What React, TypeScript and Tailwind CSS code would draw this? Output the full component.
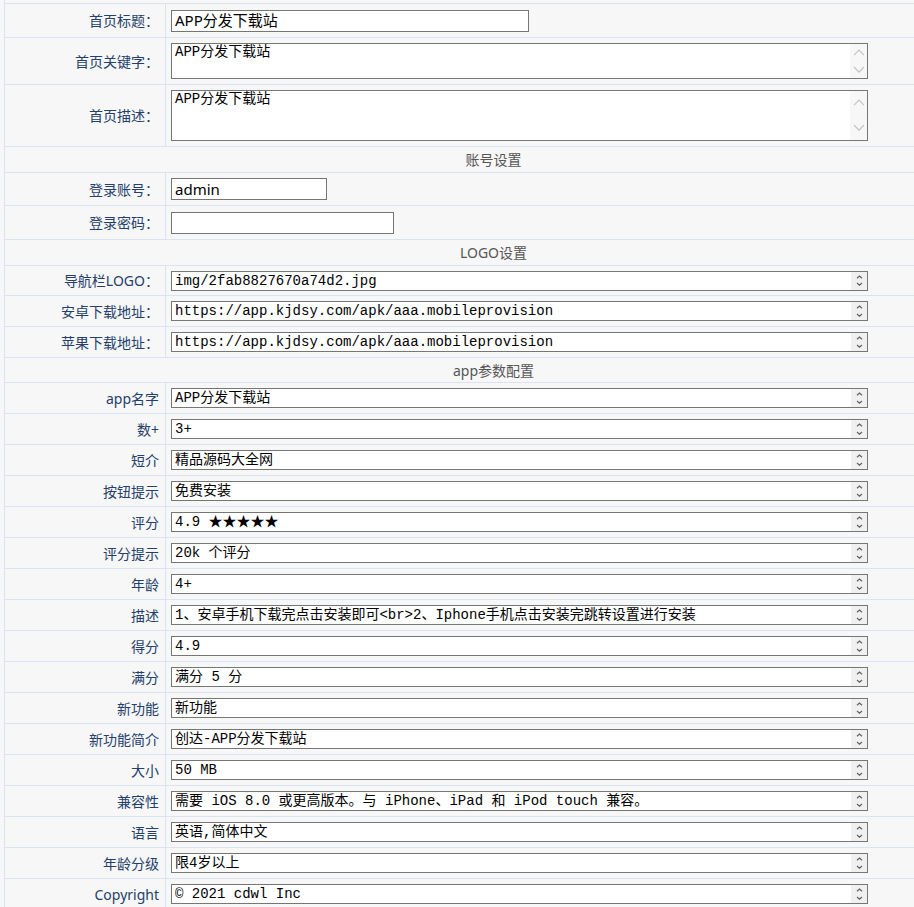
import type { ReactNode } from 'react';

const LABEL_FONT = { fontFamily: '"Noto Sans", "Noto Sans CJK SC", sans-serif' };
const MONO_FONT = { fontFamily: '"Liberation Mono", "Noto Sans CJK SC", monospace' };

interface AppParam {
  label: string;
  value: string;
}

const appParams: AppParam[] = [
  { label: 'app名字', value: 'APP分发下载站' },
  { label: '数+', value: '3+' },
  { label: '短介', value: '精品源码大全网' },
  { label: '按钮提示', value: '免费安装' },
  { label: '评分', value: '4.9 ★★★★★' },
  { label: '评分提示', value: '20k 个评分' },
  { label: '年龄', value: '4+' },
  { label: '描述', value: '1、安卓手机下载完点击安装即可<br>2、Iphone手机点击安装完跳转设置进行安装' },
  { label: '得分', value: '4.9' },
  { label: '满分', value: '满分 5 分' },
  { label: '新功能', value: '新功能' },
  { label: '新功能简介', value: '创达-APP分发下载站' },
  { label: '大小', value: '50 MB' },
  { label: '兼容性', value: '需要 iOS 8.0 或更高版本。与 iPhone、iPad 和 iPod touch 兼容。' },
  { label: '语言', value: '英语,简体中文' },
  { label: '年龄分级', value: '限4岁以上' },
  { label: 'Copyright', value: '© 2021 cdwl Inc' },
];

function Chevron({ up, size, color }: { up: boolean; size: number; color: string }) {
  const h = size * 0.6;
  return (
    <svg width={size} height={h} viewBox={`0 0 ${size} ${h}`} fill="none">
      <path
        d={up ? `M1 ${h - 1} L${size / 2} 1 L${size - 1} ${h - 1}` : `M1 1 L${size / 2} ${h - 1} L${size - 1} 1`}
        stroke={color}
        strokeWidth="1.2"
      />
    </svg>
  );
}

// textarea look-alike with the scrollbar arrows at the right
function Area({ value, tall }: { value: string; tall?: 'md' | 'lg' }) {
  const height = tall === 'lg' ? 'h-[51px]' : tall === 'md' ? 'h-[36px]' : 'h-[20px]';
  const big = tall === 'lg' || tall === 'md';
  return (
    <div className={`flex w-[697px] ${height} border border-[#767676] bg-white`}>
      <div
        className={`flex-1 overflow-hidden whitespace-nowrap pl-[3px] text-[14px] leading-[17px] text-black ${big ? '' : 'pt-[1px]'}`}
        style={MONO_FONT}
      >
        {value}
      </div>
      {big ? (
        <div className={`flex w-[17px] flex-col items-center justify-between bg-[#f7f7f7] ${tall === 'lg' ? 'pt-[8px] pb-[9px]' : 'py-[5px]'}`}>
          <Chevron up size={12} color="#c3c3c3" />
          <Chevron up={false} size={12} color="#c3c3c3" />
        </div>
      ) : (
        <div className="flex w-[16px] flex-col items-center justify-center gap-[3px] bg-[#f0f0f0]">
          <Chevron up size={7} color="#606060" />
          <Chevron up={false} size={7} color="#606060" />
        </div>
      )}
    </div>
  );
}

function TextInput({ value, width }: { value: string; width: string }) {
  return (
    <div className={`flex h-[22px] ${width} items-center border border-[#767676] bg-white pl-[3px] text-[15px] text-black`} style={LABEL_FONT}>
      {value}
    </div>
  );
}

function Row({ label, height, children }: { label: string; height: string; children: ReactNode }) {
  return (
    <div className={`flex ${height} border-b border-[#d9e3f3]`}>
      <div
        className="flex w-[161px] shrink-0 items-center justify-end border-r border-[#d9e3f3] pr-[6px] text-[14px] text-[#24406a]"
        style={LABEL_FONT}
      >
        {label}
      </div>
      <div className="flex flex-1 items-center pl-[5px]">{children}</div>
    </div>
  );
}

function Section({ title, height }: { title: string; height: string }) {
  return (
    <div className={`flex ${height} items-center justify-center border-b border-[#d9e3f3] text-[14px] text-[#555]`} style={LABEL_FONT}>
      {title}
    </div>
  );
}

export default function App() {
  return (
    <div className="h-[907px] w-[914px] overflow-hidden bg-[#f7f7f7]">
      <div className="ml-[4px] w-[978px] border-l border-[#d9e3f3]">
        <div className="h-[4px] border-b border-[#d9e3f3]" />

        <Row label="首页标题：" height="h-[34px]">
          <TextInput value="APP分发下载站" width="w-[358px]" />
        </Row>
        <Row label="首页关键字：" height="h-[47px]">
          <Area value="APP分发下载站" tall="md" />
        </Row>
        <Row label="首页描述：" height="h-[62px]">
          <Area value="APP分发下载站" tall="lg" />
        </Row>

        <Section title="账号设置" height="h-[26px]" />
        <Row label="登录账号：" height="h-[33px]">
          <TextInput value="admin" width="w-[156px]" />
        </Row>
        <Row label="登录密码：" height="h-[34px]">
          <TextInput value="" width="w-[223px]" />
        </Row>

        <Section title="LOGO设置" height="h-[26px]" />
        <Row label="导航栏LOGO：" height="h-[30px]">
          <Area value="img/2fab8827670a74d2.jpg" />
        </Row>
        <Row label="安卓下载地址：" height="h-[31px]">
          <Area value="https://app.kjdsy.com/apk/aaa.mobileprovision" />
        </Row>
        <Row label="苹果下载地址：" height="h-[31px]">
          <Area value="https://app.kjdsy.com/apk/aaa.mobileprovision" />
        </Row>

        <Section title="app参数配置" height="h-[25px]" />
        {appParams.map((p) => (
          <Row key={p.label} label={p.label} height="h-[31px]">
            <Area value={p.value} />
          </Row>
        ))}
      </div>
    </div>
  );
}
